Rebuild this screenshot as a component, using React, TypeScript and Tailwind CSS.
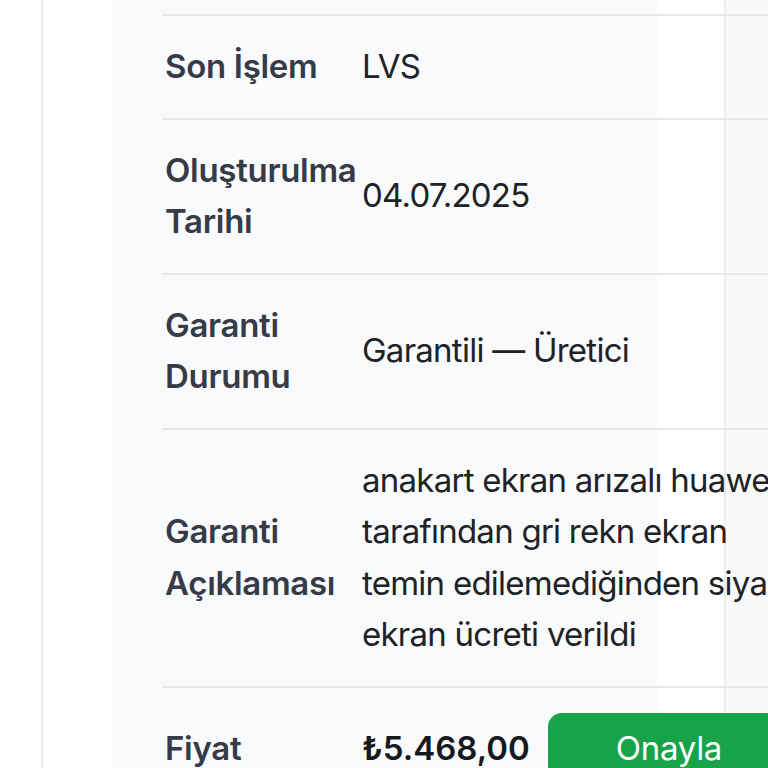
const rows: { label: string; value: string }[] = [
  { label: "Son İşlem", value: "LVS" },
  { label: "Oluşturulma Tarihi", value: "04.07.2025" },
  { label: "Garanti Durumu", value: "Garantili — Üretici" },
  {
    label: "Garanti Açıklaması",
    value:
      "anakart ekran arızalı huawei tarafından gri rekn ekran temin edilemediğinden siyah ekran ücreti verildi",
  },
];

export default function App() {
  return (
    <div className="w-[768px] h-[768px] overflow-hidden font-['Inter',sans-serif] bg-[linear-gradient(to_right,#fff_0,#fff_41px,#ececec_41px,#ececec_43px,#fff_43px,#fff_112px,#f9fafb_112px,#f9fafb_657px,#fff_657px,#fff_724px,#ededed_724px,#ededed_726px,#f9f9f9_726px)]">
      <table className="mt-[14px] ml-[162px] w-[640px] table-fixed border-collapse text-[33px] leading-[51.5px]">
        <tbody>
          {rows.map((r, i) => (
            <tr
              key={r.label}
              className={`border-b-2 border-[#e7e8eb] ${i === 0 ? "border-t-2" : ""}`}
            >
              <td className="w-[200px] pl-[3px] pr-[4px] py-[25px] align-middle font-semibold tracking-[-0.3px] text-[#363b47]">
                {r.label}
              </td>
              <td className="w-[440px] py-[25px] align-middle tracking-[-0.75px] text-[#202226]">
                {r.value}
              </td>
            </tr>
          ))}
          <tr>
            <td className="w-[200px] pl-[3px] py-[25px] align-middle font-semibold tracking-[-0.3px] text-[#363b47]">
              Fiyat
            </td>
            <td className="w-[440px] py-[25px] align-middle">
              <div className="flex items-center gap-[18px]">
                <span className="font-semibold text-[#15181d]">₺5.468,00</span>
                <button className="rounded-[14px] bg-[#18a349] px-[68px] py-[10px] tracking-[-0.3px] text-white">
                  Onayla
                </button>
              </div>
            </td>
          </tr>
        </tbody>
      </table>
    </div>
  );
}
